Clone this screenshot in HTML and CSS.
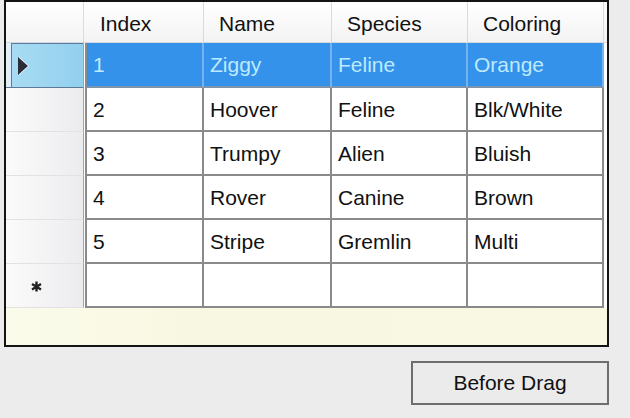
FILE: index.html
```html
<!DOCTYPE html>
<html>
<head>
<meta charset="utf-8">
<link rel="stylesheet" href="styles.css">
</head>
<body>
<div class="grid">
  <div class="row head">
    <div class="rh corner"></div>
    <div class="c c1">Index</div>
    <div class="c c2">Name</div>
    <div class="c c3">Species</div>
    <div class="c c4">Coloring</div>
  </div>
  <div class="row sel">
    <div class="rh"><div class="rhbox"><span class="arrow"></span></div></div>
    <div class="c c1">1</div>
    <div class="c c2">Ziggy</div>
    <div class="c c3">Feline</div>
    <div class="c c4">Orange</div>
  </div>
  <div class="row">
    <div class="rh"></div>
    <div class="c c1">2</div>
    <div class="c c2">Hoover</div>
    <div class="c c3">Feline</div>
    <div class="c c4">Blk/White</div>
  </div>
  <div class="row">
    <div class="rh"></div>
    <div class="c c1">3</div>
    <div class="c c2">Trumpy</div>
    <div class="c c3">Alien</div>
    <div class="c c4">Bluish</div>
  </div>
  <div class="row">
    <div class="rh"></div>
    <div class="c c1">4</div>
    <div class="c c2">Rover</div>
    <div class="c c3">Canine</div>
    <div class="c c4">Brown</div>
  </div>
  <div class="row">
    <div class="rh"></div>
    <div class="c c1">5</div>
    <div class="c c2">Stripe</div>
    <div class="c c3">Gremlin</div>
    <div class="c c4">Multi</div>
  </div>
  <div class="row newrow">
    <div class="rh"><svg class="star" width="11" height="11" viewBox="0 0 11 11"><path d="M5.5 0.5V10.5M1 3L10 8.5M1 8.5L10 3" stroke="#222" stroke-width="2.4" fill="none"/></svg></div>
    <div class="c c1"></div>
    <div class="c c2"></div>
    <div class="c c3"></div>
    <div class="c c4"></div>
  </div>
  <div class="filler"></div>
</div>
<div class="actions">
  <button class="btn">Before Drag</button>
</div>
</body>
</html>
```

FILE: styles.css
```css
html, body {
  margin: 0;
  padding: 0;
}
body {
  width: 630px;
  height: 418px;
  overflow: hidden;
  background: #ececec;
  font-family: "Liberation Sans", Arial, sans-serif;
  font-size: 21px;
  color: #111;
}
.grid {
  margin-left: 4px;
  width: 601px;
  height: 343px;
  border: 2px solid #141414;
  background: #fff;
  display: flex;
  flex-direction: column;
}
.row {
  display: flex;
  height: 44px;
  background: #fff;
  flex: none;
}
.row.head {
  height: 41px;
  background: linear-gradient(#ffffff, #f3f3f3);
  border-bottom: 1px solid #d3d9e0;
  box-sizing: border-box;
}
.row.sel {
  height: 45px;
}
.rh {
  width: 78px;
  flex: none;
  box-sizing: border-box;
  border-right: 1px solid #a4a4a4;
  border-bottom: 1px solid #e2e2e2;
  background: linear-gradient(to right, #fbfbfb, #ececef);
  margin-right: 1px;
  display: flex;
  align-items: center;
}
.head .rh {
  background: transparent;
  border-right: 1px solid #dcdcdc;
  border-bottom: none;
}
.c {
  box-sizing: border-box;
  flex: none;
  border-right: 2px solid #8a8a8a;
  border-bottom: 2px solid #8a8a8a;
  display: flex;
  align-items: center;
  padding-left: 6px;
  padding-top: 1px;
  white-space: nowrap;
}
.c1 {
  width: 119px;
  border-left: 2px solid #8a8a8a;
}
.c2 { width: 128px; }
.c3 { width: 136px; }
.c4 { width: 136px; }
.head .c {
  border: none;
  border-right: 1px solid #dadada;
  padding-left: 15px;
  padding-top: 4px;
  color: #111;
}
.sel .c {
  background: #3592ea;
  color: #bdeaff;
  border-right-color: #74b3ee;
  border-bottom-color: #7f95ab;
}
.sel .c1 {
  border-left-color: #8a8a8a;
}
.sel .rh {
  padding-left: 5px;
  background: #e3eff6;
  border-bottom: 1px solid #5d7b99;
}
.rhbox {
  align-self: stretch;
  flex: 1;
  box-sizing: border-box;
  border: 1px solid #5a7b9c;
  border-right: none;
  border-bottom: none;
  background: linear-gradient(to right, #a8dbf3, #92d0ee);
  display: flex;
  align-items: center;
  padding-left: 6px;
}
.arrow {
  width: 0;
  height: 0;
  border-left: 10px solid #2c2c38;
  border-top: 9px solid transparent;
  border-bottom: 9px solid transparent;
  filter: drop-shadow(1px 0 0 #fff);
}
.newrow .rh {
  padding-left: 25px;
  padding-top: 1px;
}
.star {
  display: block;
}
.filler {
  flex: 1;
  background: linear-gradient(to right, #fbfbeb, #f8f8e2 30%, #f9f9e3);
}
.actions {
  display: flex;
  justify-content: flex-end;
  padding-top: 14px;
  padding-right: 21px;
}
.btn {
  width: 198px;
  height: 44px;
  border: 2px solid #6e6e6e;
  background: #ebebeb;
  font-family: inherit;
  font-size: 21px;
  color: #111;
  padding: 0;
  margin: 0;
}
```
